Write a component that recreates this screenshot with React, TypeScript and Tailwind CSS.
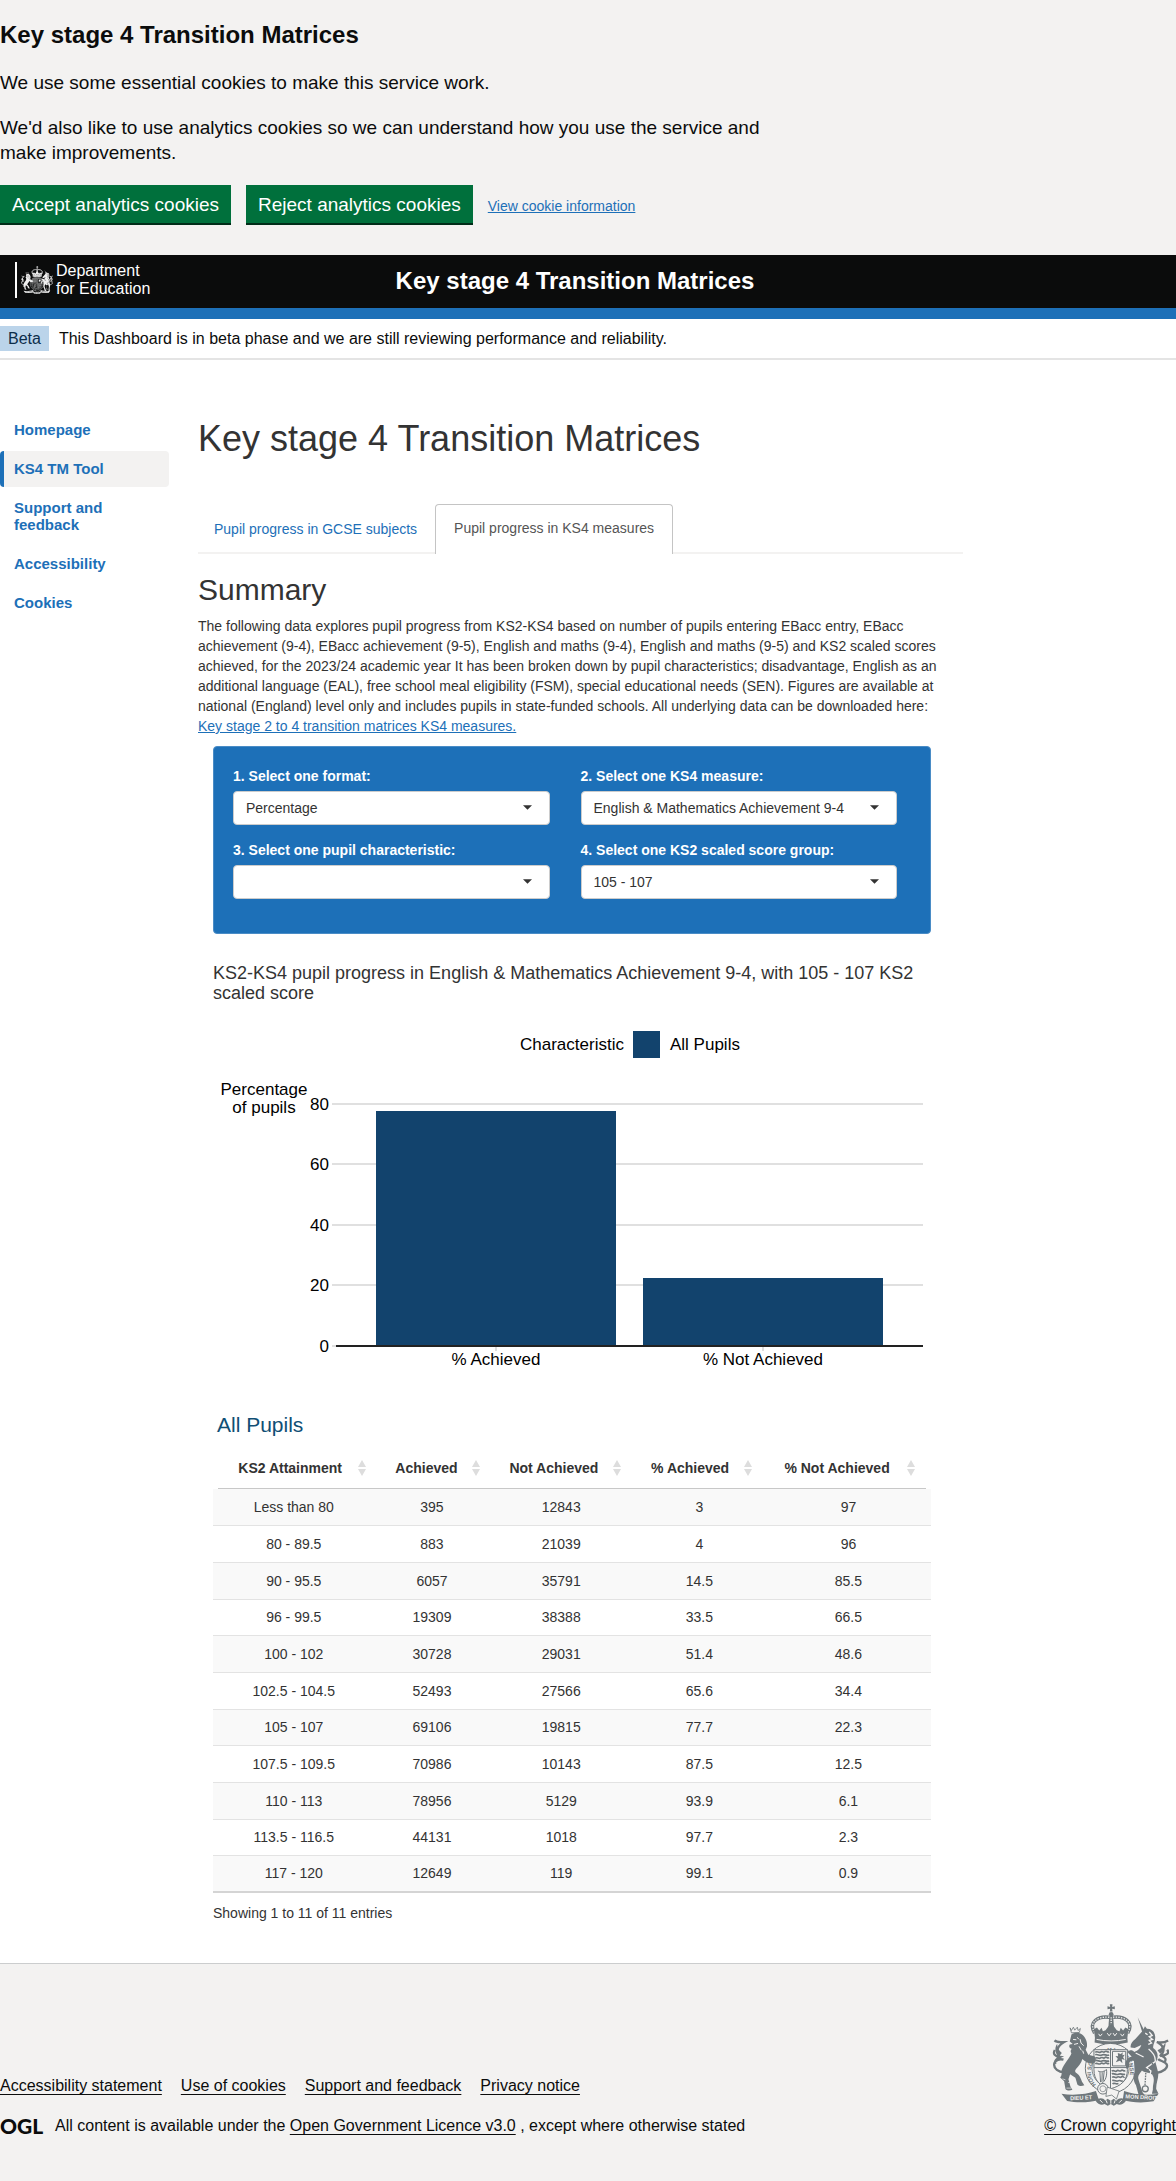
import type { ReactNode } from "react";

function Crest({ ink, paper, className, motto = false }: { ink: string; paper: string; className: string; motto?: boolean }) {
  return (
    <svg viewBox="66 70 352 308" className={className} fill={ink} stroke="none" aria-hidden="true">
      {/* crown */}
      <path d="M240 71h8l-1 8 8-2v9l-8-2 1 9h-8l1-9-8 2v-9l8 2z" />
      <circle cx="244" cy="101" r="7" />
      <path d="M238 106h12l3 46h-18z" />
      <path d="M244 110v34" stroke={paper} strokeWidth="4" strokeDasharray="4 3" />
      <path d="M194 158C174 124 204 106 238 110M294 158C314 124 284 106 250 110" fill="none" stroke={ink} strokeWidth="10" />
      <path d="M194 156C175 124 204 107 238 110M294 156C313 124 284 107 250 110" fill="none" stroke={paper} strokeWidth="4" strokeDasharray="4 4" />
      <path d="M192 146l9-5 7 9 7-8 4 10 8-3 9-12 8-8 8 8 9 12 8 3 4-10 7 8 7-9 9 5-3 26 1 14c-30 8-70 8-100 0l1-14z" />
      <path d="M206 160l5 7 6-7M232 158l6 8 6-8M250 158l5 8 6-8M272 160l6 7 5-7" fill="none" stroke={paper} strokeWidth="3" />
      <path d="M200 177c28 6 60 6 88 0" fill="none" stroke={paper} strokeWidth="3" />
      {/* garter and quartered shield */}
      <ellipse cx="242" cy="264" rx="76" ry="75" fill={paper} stroke={ink} strokeWidth="3" />
      <ellipse cx="242" cy="264" rx="56" ry="57" fill={paper} stroke={ink} strokeWidth="2.5" />
      {motto ? (
        <>
          <path id="garter" d="M200 315A59 59 0 1 1 284 315" fill="none" />
          <text fontSize="17" fontFamily="'Liberation Sans', Arial, sans-serif" fontWeight="700">
            <textPath href="#garter" startOffset="2">HONI SOIT QUI MAL Y PENSE</textPath>
          </text>
        </>
      ) : (
        <path
          d="M242 197a66 66 0 0 1 60 94M242 197a66 66 0 0 0-60 94M188 303l14 17M296 303l-14 17"
          fill="none"
          stroke={ink}
          strokeWidth="9"
          strokeDasharray="2.5 3.5 2 5"
        />
      )}
      <path d="M192 208h101v60c0 34-20 50-51 58-31-8-50-24-50-58z" fill={paper} stroke={ink} strokeWidth="3" />
      <path d="M242 208v118M192 262h101" stroke={ink} strokeWidth="3" />
      <path
        d="M196 216c6-6 10 4 16-1s8 4 13-1 7 4 13 0M196 223c8-3 12 5 20 1s12 3 22 0M196 234c6-6 10 4 16-1s8 4 13-1 7 4 13 0M196 241c8-3 12 5 20 1s12 3 22 0M196 251c6-6 10 4 16-1s8 4 13-1 7 4 13 0M246 273c6-6 10 4 15-1s8 4 13-1 7 4 13 0M246 281c8-3 12 5 20 1s12 3 20 0M247 292c6-6 10 4 15-1s8 4 13-1 7 4 9 0M247 301c8-3 12 5 18 1s8 3 14 0M248 311c6-5 10 3 18-1"
        fill="none"
        stroke={ink}
        strokeWidth="5"
      />
      <path d="M248 213h40v44h-40z" fill="none" stroke={ink} strokeWidth="3" />
      <path d="M258 246l6-11-7-8 8 1-1-10 9 3 6-5-1 9 7-2-5 8 5 8-9-3 2 13-8-8z" />
      <path d="M204 272c8 6 18 2 26-4 2 18-2 34-16 43M210 276l2 30M217 276l-1 30M223 272l-3 30" fill="none" stroke={ink} strokeWidth="3" />
      <circle cx="219" cy="326" r="16" fill={paper} stroke={ink} strokeWidth="3" />
      <circle cx="219" cy="326" r="9" fill="none" stroke={ink} strokeWidth="2" />
      <path d="M232 321l36 12-8 24-14-12-18 4z" fill={paper} stroke={ink} strokeWidth="2.5" />
      {/* lion */}
      <path d="M120 142l4 8 6-10 4 9 8-9 2 10 7-6-3 12-24 1z" fill="none" stroke={ink} strokeWidth="2.5" />
      <path d="M124 162c8-7 24-7 32 0 10 8 17 22 15 36l-4 10 8 15 18 5c7 5 6 18-2 21-12 3-25-4-34-13-3 13-12 22-18 29-6 6-5 11 2 15 8 6 11 14 15 25l7 10c-8 4-17 3-21-2l-6-20-16-11-5 15 6 22 6 10c-8 4-18 3-21-2l-4-24-12-11c6-7 5-15 4-21 8-22 26-38 30-52-4-6-2-10 1-14-8-2-9-9-6-13l9-1-9-8z" />
      <path d="M129 177l10 1M132 192l12-3M150 176l3 12 8 8M147 198l7 12M158 211l3 9M141 171l5 4" fill="none" stroke={paper} strokeWidth="3" />
      <path d="M103 277c-18-2-33-11-31-26 2-13 18-16 28-13M76 251c-5-9 4-16 14-21-16-2-23-9-16-21M88 229c-12-15-8-31 14-44-14 0-22 2-29-5" fill="none" stroke={ink} strokeWidth="7" />
      <path d="M81 190c0 12 5 20 14 28l-9 11c-10-10-15-24-5-39z" />
      <path d="M114 307h15M97 296l9 3M109 324h15" stroke={paper} strokeWidth="2" />
      {/* unicorn */}
      <path d="M324 110l21 42-7 3z" />
      <path d="M340 150l6-13 6 8c16 0 24 10 25 24 1 16-8 24-6 34 17 13 16 29 7 44l7 26c5 18-6 32-5 54l7 14h-20l3-13c-1-19 8-28-2-45-12-8-24-4-31-12-9 13-15 16-9 32l11 34 6 8h-18l-8-30c-9-13-9-28-4-39l-2-34c-14-2-17 6-13 17l-9 7c-8-18-2-34 15-37l-13-14c7-7 15-7 21 0 12-5 17-10 21-21l-20 9-12-2c-2-10 6-18 14-25z" />
      <path d="M347 158l7 5M359 154l9 11-9 4 10 8-10 3 7 8-10 4M318 218l24 12M357 206c15 12 22 24 20 38l-26 18 13 10-4 18-9 7-4 17" fill="none" stroke={paper} strokeWidth="4" />
      <path d="M370 240l-3 20-18 12-3 45" fill="none" stroke={ink} strokeWidth="4" strokeDasharray="5 3" />
      <circle cx="347" cy="326" r="9" fill="none" stroke={ink} strokeWidth="4" />
      <path d="M381 278c22-4 35-15 31-25-5-11-21-10-26-17M404 247c8-9 4-16-8-21 17-1 25-8 17-18M391 228c15-14 17-29-9-43 15 3 24 1 34-5" fill="none" stroke={ink} strokeWidth="7" />
      <path d="M408 186c1 15-5 24-16 34l-8-10c10-6 18-13 24-24z" />
      {/* motto scroll and plants */}
      <path d="M94 341c35 6 75 2 104-8l9 27c-29 8-66 9-96 3zM283 333c28 10 68 14 104 8l-15 23c-31 5-67 4-93-4z" />
      {motto ? (
        <g fill={paper} fontSize="17" fontFamily="'Liberation Sans', Arial, sans-serif" fontWeight="700">
          <text x="120" y="359" transform="rotate(-3 155 355)">DIEU ET</text>
          <text x="287" y="357" transform="rotate(3 330 355)">MON DROIT</text>
        </g>
      ) : (
        <path d="M118 354c24 2 53 0 75-7M291 347c23 7 50 9 72 7" fill="none" stroke={paper} strokeWidth="9" strokeDasharray="2 3 4 3 2 2" />
      )}
      <path d="M197 362c10-10 23-9 29 0l7-6 10 6 9-6 8 6c8-9 20-10 29 0-8 10-18 15-28 10l-9 5-9-5-9 5-10-5c-10 5-20 0-27-10z" />
      <path d="M229 361l3 9M243 361v10M256 361l-3 9M210 360l8 8M276 360l-8 8" stroke={paper} strokeWidth="3" />
    </svg>
  );
}

const navItems = ["Homepage", "KS4 TM Tool", "Support and feedback", "Accessibility", "Cookies"];

function SelectField({ id, label, options }: { id: string; label: string; options: string[] }) {
  return (
    <div className="min-w-0">
      <label htmlFor={id} className="mb-[5px] block font-bold text-white">
        {label}
      </label>
      <div className="relative">
        <select
          id={id}
          className="block h-[34px] w-full appearance-none rounded border border-[#cccccc] bg-white pr-8 pl-3 text-[#333333]"
        >
          {options.map((o) => (
            <option key={o}>{o}</option>
          ))}
        </select>
        <svg viewBox="0 0 8 4" className="pointer-events-none absolute top-[14px] right-[18px] h-[5px] w-[9px]" fill="#333333" aria-hidden="true">
          <path d="M0 0h8L4 4z" />
        </svg>
      </div>
    </div>
  );
}

const bars = [
  { label: "% Achieved", value: 77.7, x: 163 },
  { label: "% Not Achieved", value: 22.3, x: 430 },
];
const ticks = [80, 60, 40, 20, 0];
const baseY = 343;
const unit = 3.03;

function Chart() {
  return (
    <svg
      viewBox="0 0 718 407"
      className="block h-auto w-full"
      fontFamily="'Liberation Sans', Arial, sans-serif"
      fontSize="17"
      role="img"
      aria-label="Percentage of pupils by achievement"
    >
      <text x="307" y="47">Characteristic</text>
      <rect x="420" y="28" width="27" height="27" fill="#12436d" />
      <text x="457" y="47">All Pupils</text>
      <text x="51" y="92" textAnchor="middle">Percentage</text>
      <text x="51" y="110" textAnchor="middle">of pupils</text>
      {ticks.map((t) => (
        <g key={t}>
          <text x="116" y={Math.round(baseY - t * unit) + 6} textAnchor="end">
            {t}
          </text>
          <rect x="119" y={Math.round(baseY - t * unit) - 1} width="591" height="2" fill="#e0e0e0" />
        </g>
      ))}
      {bars.map((b) => (
        <g key={b.label}>
          <rect x={b.x} y={Math.round(baseY - b.value * unit)} width="240" height={Math.round(b.value * unit)} fill="#12436d" />
          <rect x={b.x + 119} y={baseY} width="2" height="5" fill="#dedede" />
          <text x={b.x + 120} y="362" textAnchor="middle">
            {b.label}
          </text>
        </g>
      ))}
      <rect x="123" y={baseY - 1} width="587" height="2" fill="#222222" />
    </svg>
  );
}

const columns = [
  { name: "KS2 Attainment", width: "w-[22.5%]" },
  { name: "Achieved", width: "w-[16%]" },
  { name: "Not Achieved", width: "w-[20%]" },
  { name: "% Achieved", width: "w-[18.5%]" },
  { name: "% Not Achieved", width: "w-[23%]" },
];

const rows = [
  ["Less than 80", "395", "12843", "3", "97"],
  ["80 - 89.5", "883", "21039", "4", "96"],
  ["90 - 95.5", "6057", "35791", "14.5", "85.5"],
  ["96 - 99.5", "19309", "38388", "33.5", "66.5"],
  ["100 - 102", "30728", "29031", "51.4", "48.6"],
  ["102.5 - 104.5", "52493", "27566", "65.6", "34.4"],
  ["105 - 107", "69106", "19815", "77.7", "22.3"],
  ["107.5 - 109.5", "70986", "10143", "87.5", "12.5"],
  ["110 - 113", "78956", "5129", "93.9", "6.1"],
  ["113.5 - 116.5", "44131", "1018", "97.7", "2.3"],
  ["117 - 120", "12649", "119", "99.1", "0.9"],
];

function DataTable() {
  return (
    <table className="block" aria-labelledby="table-title">
      <thead className="mx-auto table w-[calc(100%-10px)] table-fixed">
        <tr>
          {columns.map((c) => (
            <th key={c.name} scope="col" className={`${c.width} border-b border-[#c8c8c8] p-0 pt-[18px] pb-[10px]`}>
              <button type="button" className="flex w-full items-center pr-[11px] pl-[14px] font-bold">
                <span className="flex-1 text-center">{c.name}</span>
                <svg viewBox="0 0 8 16" className="ml-[10px] h-4 w-2 shrink-0" fill="#dddddd" aria-hidden="true">
                  <path d="M4 0l4 7H0zM4 16l4-7H0z" />
                </svg>
              </button>
            </th>
          ))}
        </tr>
      </thead>
      <tbody className="table w-full table-fixed border-b-2 border-[#d4d4d4]">
        {rows.map((r) => (
          <tr key={r[0]} className="h-[37px] odd:bg-[#f9f9f9] nth-[3n+1]:h-9">
            {r.map((v, i) => (
              <td key={columns[i].name} className={`${columns[i].width} border-b border-[#e3e3e3] p-0 text-center`}>
                {v}
              </td>
            ))}
          </tr>
        ))}
      </tbody>
    </table>
  );
}

function FooterLink({ children }: { children: ReactNode }) {
  return (
    <a href="#" className="underline decoration-1 underline-offset-[3px]">
      {children}
    </a>
  );
}

export default function App() {
  return (
    <div className="bg-white font-['Liberation_Sans',Arial,sans-serif] text-sm text-[#333333]">
      <section aria-label="Cookies on this service" className="bg-[#f3f2f1] pt-5 pb-8 text-[#0b0c0c]">
        <h2 className="mb-5 text-2xl leading-[30px] font-bold">Key stage 4 Transition Matrices</h2>
        <div className="max-w-[784px] text-[19px] leading-[25px]">
          <p className="mb-5">We use some essential cookies to make this service work.</p>
          <p className="mb-5">
            We'd also like to use analytics cookies so we can understand how you use the service and make improvements.
          </p>
        </div>
        <div className="flex flex-wrap items-center gap-[15px]">
          <button type="button" className="bg-[#00703c] px-3 pt-[10px] pb-[9px] text-[19px] leading-[19px] text-white shadow-[0_2px_0_#002d18]">
            Accept analytics cookies
          </button>
          <button type="button" className="bg-[#00703c] px-3 pt-[10px] pb-[9px] text-[19px] leading-[19px] text-white shadow-[0_2px_0_#002d18]">
            Reject analytics cookies
          </button>
          <a href="#" className="pt-1 text-[#1d70b8] underline">
            View cookie information
          </a>
        </div>
      </section>

      <header className="flex h-16 items-center border-b-[11px] border-[#1d70b8] bg-[#0b0c0c] text-white">
        <div className="flex w-[160px] items-center pl-[15px] pb-1">
          <div className="flex items-center border-l-2 border-white pl-1">
            <Crest ink="#f0f0f0" paper="#0b0c0c" className="h-[30px] w-8" />
            <span className="ml-[3px] text-base leading-[18px] whitespace-nowrap">
              Department
              <br />
              for Education
            </span>
          </div>
        </div>
        <div className="flex-1 pb-[2px] text-center text-2xl leading-[30px] font-bold">Key stage 4 Transition Matrices</div>
        <div className="w-[186px]" />
      </header>

      <div className="flex items-center border-b-2 border-[#e4e4e4] pt-[7px] pb-[7px] text-base leading-[25px] text-[#0b0c0c]">
        <strong className="bg-[#bbd4ea] px-2 font-normal text-[#0c2d4a]">Beta</strong>
        <span className="ml-[10px]">This Dashboard is in beta phase and we are still reviewing performance and reliability.</span>
      </div>

      <div className="flex items-start">
        <nav className="mt-[52px] w-[169px] shrink-0" aria-label="Main">
          <ul className="flex flex-col gap-[3px]">
            {navItems.map((n) => (
              <li key={n}>
                <a
                  href="#"
                  aria-current={n === "KS4 TM Tool" ? "page" : undefined}
                  className="block rounded border-l-4 border-transparent pt-[9px] pr-8 pb-[10px] pl-[10px] text-[15px] leading-[17px] font-bold text-[#1d70b8] aria-[current=page]:border-[#1d70b8] aria-[current=page]:bg-[#f3f2f1]"
                >
                  {n}
                </a>
              </li>
            ))}
          </ul>
        </nav>

        <main className="ml-[29px] max-w-[765px] flex-1 pt-[59px] leading-5">
          <h1 className="mb-[45px] text-4xl leading-10">Key stage 4 Transition Matrices</h1>
          <div role="tablist" className="flex h-[50px] gap-[2px] bg-[linear-gradient(#f3f2f1,#f3f2f1)] bg-[length:100%_2px] bg-bottom bg-no-repeat">
            <button type="button" role="tab" aria-selected="false" className="px-4 text-[#1d70b8]">
              Pupil progress in GCSE subjects
            </button>
            <button type="button" role="tab" aria-selected="true" className="rounded-t border border-b-0 border-[#c4c4c4] bg-white px-[18px] pb-[3px] text-[#555555]">
              Pupil progress in KS4 measures
            </button>
          </div>
          <h2 className="mt-[18px] mb-2 text-3xl leading-9">Summary</h2>
          <p className="mb-[10px] pr-4">
            The following data explores pupil progress from KS2-KS4 based on number of pupils entering EBacc entry, EBacc
            achievement (9-4), EBacc achievement (9-5), English and maths (9-4), English and maths (9-5) and KS2 scaled scores
            achieved, for the 2023/24 academic year It has been broken down by pupil characteristics; disadvantage, English as an
            additional language (EAL), free school meal eligibility (FSM), special educational needs (SEN). Figures are available at
            national (England) level only and includes pupils in state-funded schools. All underlying data can be downloaded here:{" "}
            <a href="#" className="text-[#1d70b8] underline">
              Key stage 2 to 4 transition matrices KS4 measures.
            </a>
          </p>

          <div className="mr-8 ml-[15px]">
            <form className="grid grid-cols-2 gap-x-[31px] gap-y-[15px] rounded border border-[#4a8cc6] bg-[#1d70b8] pt-[19px] pr-[33px] pb-[34px] pl-[19px]">
              <SelectField id="format" label="1. Select one format:" options={["Percentage"]} />
              <SelectField id="measure" label="2. Select one KS4 measure:" options={["English & Mathematics Achievement 9-4"]} />
              <SelectField id="characteristic" label="3. Select one pupil characteristic:" options={[""]} />
              <SelectField id="score" label="4. Select one KS2 scaled score group:" options={["105 - 107"]} />
            </form>

            <h3 className="mt-[29px] text-lg leading-5">
              KS2-KS4 pupil progress in English &amp; Mathematics Achievement 9-4, with 105 - 107 KS2 scaled score
            </h3>
            <Chart />
            <h4 id="table-title" className="ml-1 text-[21px] leading-[30px] text-[#104f75]">
              All Pupils
            </h4>
            <DataTable />
            <p className="mt-[10px] mb-10">Showing 1 to 11 of 11 entries</p>
          </div>
        </main>
      </div>

      <footer className="flex items-end justify-between border-t border-[#cbcdce] bg-[#f3f2f1] pt-10 pb-[45px] text-base leading-5 text-[#0b0c0c]">
        <div>
          <ul className="mb-5 flex gap-[19px]">
            <li><FooterLink>Accessibility statement</FooterLink></li>
            <li><FooterLink>Use of cookies</FooterLink></li>
            <li><FooterLink>Support and feedback</FooterLink></li>
            <li><FooterLink>Privacy notice</FooterLink></li>
          </ul>
          <div className="flex items-center">
            <span className="w-[55px] font-[Lato] text-[21px] font-black">OGL</span>
            <span>
              All content is available under the <FooterLink>Open Government Licence v3.0</FooterLink> , except where otherwise stated
            </span>
          </div>
        </div>
        <div className="flex flex-col items-center">
          <Crest motto ink="#6f777b" paper="#f3f2f1" className="mb-[10px] h-[102px] w-[117px]" />
          <FooterLink>© Crown copyright</FooterLink>
        </div>
      </footer>
    </div>
  );
}
